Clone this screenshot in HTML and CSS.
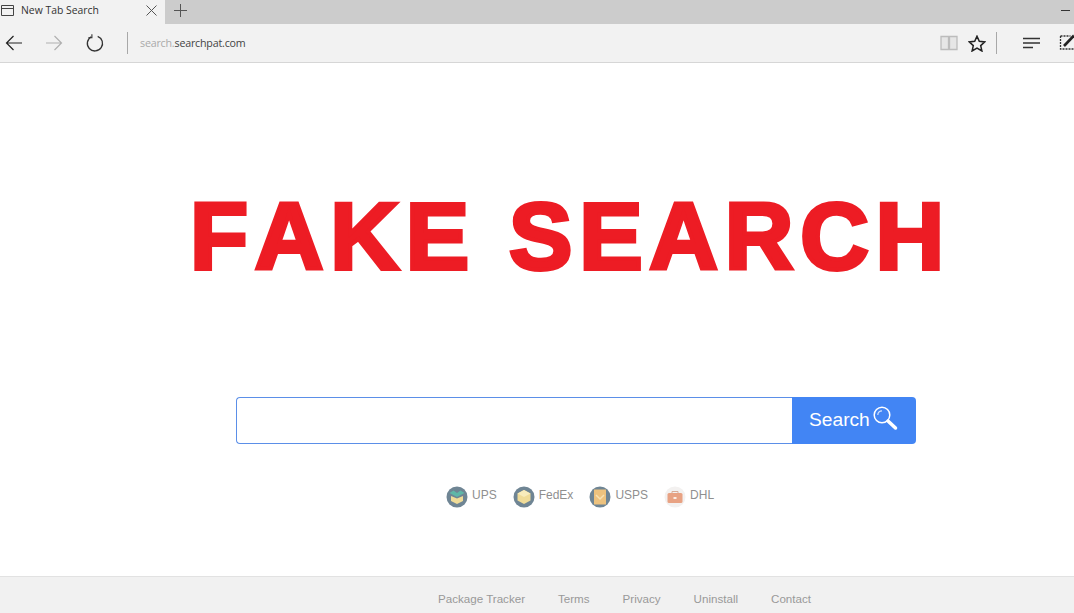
FILE: index.html
```html
<!DOCTYPE html>
<html lang="en">
<head>
    <meta charset="UTF-8">
    <title>New Tab Search</title>
    <link rel="stylesheet" href="styles.css">
</head>
<body>
    <div class="tabbar">
        <div class="tab">
            <svg class="tab-icon" width="13" height="11" viewBox="0 0 13 11"><path d="M.5.5h12v10H.5zM.5 3.500h12" fill="none" stroke="#444" stroke-width="1"/></svg>
            <span class="tab-title">New Tab Search</span>
            <svg class="tab-close" width="11" height="11" viewBox="0 0 11 11"><path d="M.5.5l10 10M10.500.5l-10 10" stroke="#555" stroke-width="1"/></svg>
        </div>
        <svg class="tab-new" width="13" height="13" viewBox="0 0 13 13"><path d="M6.500 0v13M0 6.500h13" stroke="#555" stroke-width="1"/></svg>
        <div class="window-min"></div>
    </div>
    <div class="toolbar">
        <svg class="nav-btn" width="18" height="16" viewBox="0 0 18 16"><path d="M17 8H1.500M8.500 1l-7 7 7 7" fill="none" stroke="#222" stroke-width="1.200"/></svg>
        <svg class="nav-btn forward" width="18" height="16" viewBox="0 0 18 16"><path d="M1 8h15.500M9.500 1l7 7-7 7" fill="none" stroke="#b0b0b0" stroke-width="1.200"/></svg>
        <svg class="nav-btn reload" width="18" height="18" viewBox="0 0 18 18"><path d="M5.300 2.700a7.600 7.600 0 1 0 6.400-.4" fill="none" stroke="#333" stroke-width="1.300"/><path d="M5.900 .2v3.600h-3.600" fill="none" stroke="#333" stroke-width="1.100"/></svg>
        <div class="divider"></div>
        <div class="address"><span class="host-dim">search.</span>searchpat.com</div>
        <svg class="tool-book" width="18" height="16" viewBox="0 0 18 16"><path d="M1 1.500h7.500v13H1zM9.500 1.500H17v13H9.500z" fill="#e6e6e6" stroke="#bcbcbc" stroke-width="1.300"/></svg>
        <svg class="tool-star" width="18" height="17" viewBox="0 0 18 17"><path d="M9 1.200l2.300 5.100 5.500.6-4.100 3.700 1.200 5.400L9 13.200 4.100 16l1.200-5.400L1.200 6.900l5.500-.6z" fill="none" stroke="#222" stroke-width="1.500"/></svg>
        <div class="divider short"></div>
        <svg class="tool-hub" width="18" height="12" viewBox="0 0 18 12"><path d="M0 1.500h17M0 6h17M0 10.500h10" stroke="#333" stroke-width="1.500"/></svg>
        <svg class="tool-note" width="16" height="18" viewBox="0 0 16 18"><path d="M1.500 2h10M1.500 2v13h13" fill="none" stroke="#333" stroke-width="1.300" stroke-dasharray="2 1"/><path d="M5 12L15 1.500" stroke="#222" stroke-width="2.600"/></svg>
    </div>

    <main class="page">
        <h1 class="stamp">FAKE SEARCH</h1>
        <form class="search">
            <input class="search-input" type="text">
            <button class="search-btn" type="button">Search
                <svg width="25" height="25" viewBox="0 0 25 25"><circle cx="9" cy="9" r="7.800" fill="none" stroke="#fff" stroke-width="1.500"/><path d="M4.800 9a4.200 4.200 0 0 1 4.200-4.200" fill="none" stroke="#d5e3fb" stroke-width="1.200"/><path d="M15 15l7.500 7" stroke="#fff" stroke-width="3.500" stroke-linecap="round"/></svg>
            </button>
        </form>
        <div class="carriers">
            <a class="carrier">
                <svg width="22" height="22" viewBox="0 0 22 22"><circle cx="11" cy="11" r="10.500" fill="#6f8594"/><path d="M3.500 7l4-2.500L11 7l3.500-2.500 4 2.500-7.500 4z" fill="#5fb7a8"/><path d="M5 10l6 2.500 6-2.500v5l-6 3-6-3z" fill="#f0dc98"/></svg>
                UPS
            </a>
            <a class="carrier">
                <svg width="22" height="22" viewBox="0 0 22 22"><circle cx="11" cy="11" r="10.500" fill="#6f8594"/><path d="M11 4l6.500 3.500v7L11 18l-6.500-3.500v-7z" fill="#f0dc98"/><path d="M4.500 7.500L11 11l6.500-3.500L11 4z" fill="#f8ecbc"/></svg>
                FedEx
            </a>
            <a class="carrier">
                <svg width="22" height="22" viewBox="0 0 22 22"><circle cx="11" cy="11" r="10.500" fill="#6f8594"/><rect x="5" y="3.500" width="12" height="15" fill="#edc27e"/><path d="M7 9l4 4 4-4" fill="none" stroke="#f8e2b4" stroke-width="1.500"/></svg>
                USPS
            </a>
            <a class="carrier">
                <svg width="22" height="22" viewBox="0 0 22 22"><circle cx="11" cy="11" r="10.500" fill="#f3f1f0"/><rect x="3.500" y="7" width="15" height="10" rx="1.500" fill="#e8a283"/><path d="M8 7V5.500h6V7" fill="none" stroke="#d8ab96"/><rect x="9.500" y="11" width="3" height="2" fill="#fbeee6"/></svg>
                DHL
            </a>
        </div>
    </main>

    <footer class="footer">
        <a>Package Tracker</a>
        <a>Terms</a>
        <a>Privacy</a>
        <a>Uninstall</a>
        <a>Contact</a>
    </footer>
</body>
</html>
```

FILE: styles.css
```css
* { box-sizing: border-box; }
html, body { height: 100%; }
body { margin: 0; display: flex; flex-direction: column; height: 613px; overflow: hidden; background: #fff; font-family: 'Liberation Sans', Arial, sans-serif; }

.tabbar { display: flex; align-items: center; height: 24px; padding-bottom: 4px; background: #cccccc; flex: none; }
.tab { display: flex; align-items: center; width: 165px; height: 20px; background: #f2f2f2; box-shadow: 0 4px 0 #f2f2f2, 0 -4px 0 #f2f2f2; }
.tab-icon { margin-left: 1px; flex: none; }
.tab-title { margin-left: 7px; font-family: 'Open Sans', sans-serif; font-size: 10.400px; color: #333; }
.tab-close { margin-left: auto; margin-right: 8px; }
.tab-new { margin-left: 9px; }
.window-min { width: 9px; height: 1px; background: #333; margin-left: auto; margin-right: 4px; }

.toolbar { display: flex; align-items: center; height: 39px; background: #f2f2f2; border-bottom: 1px solid #d6d6d6; flex: none; padding-left: 5px; }
.nav-btn.forward { margin-left: 22px; }
.nav-btn.reload { margin-left: 23px; }
.divider { width: 1px; height: 22px; background: #a8a8a8; margin-left: 23px; }
.divider.short { margin-left: 10px; }
.address { margin-left: 12px; font-family: 'Open Sans', sans-serif; font-size: 10.700px; letter-spacing: -.2px; color: #444; }
.host-dim { color: #aaa; }
.tool-book { margin-left: auto; }
.tool-star { margin-left: 10px; }
.tool-hub { margin-left: 26px; }
.tool-note { margin-left: 18px; margin-right: -1px; flex: none; }

.page { flex: 1; display: flex; flex-direction: column; }
.stamp { margin: 116px 0 0 190px; font-size: 95px; line-height: 115px; font-weight: bold; font-kerning: none; letter-spacing: 6.800px; white-space: nowrap; color: #ed1c24; -webkit-text-stroke: 4px #ed1c24; }
.search { display: flex; width: 680px; height: 47px; margin: 103px 0 0 236px; }
.search-input { flex: 1; border: 1px solid #5b8fe8; border-right: none; border-radius: 4px 0 0 4px; background: #fff; outline: none; }
.search-btn { display: flex; align-items: center; width: 124px; padding: 0 0 2px 17px; border: none; border-radius: 0 4px 4px 0; background: #4285f4; color: #fff; font-family: 'Liberation Sans', sans-serif; font-size: 19.200px; }
.search-btn svg { margin-left: 3px; margin-top: -3px; }

.carriers { display: flex; gap: 16px; margin: 42px 0 0 446px; }
.carrier { display: flex; gap: 4px; font-size: 12px; color: #8f8f8f; height: 22px; line-height: 18px; }

.footer { display: flex; gap: 33px; align-items: center; height: 37px; padding: 7px 0 0 438px; flex: none; background: #f1f1f1; border-top: 1px solid #e2e2e2; font-size: 11.600px; color: #999; }
```
